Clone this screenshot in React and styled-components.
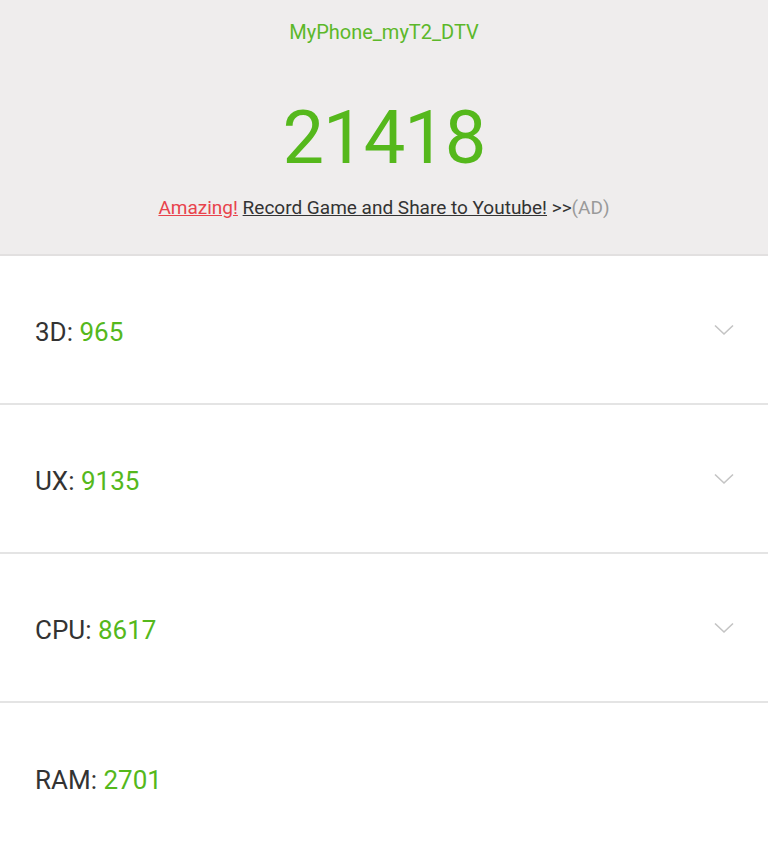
import React from "react";
import styled, { createGlobalStyle } from "styled-components";

const GlobalStyle = createGlobalStyle`
  html, body {
    margin: 0;
    padding: 0;
    background: #ffffff;
    font-family: Roboto, "Liberation Sans", sans-serif;
  }
`;

const scores = [
  { label: "3D", value: 965, expandable: true },
  { label: "UX", value: 9135, expandable: true },
  { label: "CPU", value: 8617, expandable: true },
  { label: "RAM", value: 2701, expandable: false },
];

const App = () => {
  return (
    <>
      <GlobalStyle />
      <Page>
        <Header>
          <DeviceName>MyPhone_myT2_DTV</DeviceName>
          <Total>21418</Total>
          <AdLine>
            <AdHot>Amazing!</AdHot> <AdLink>Record Game and Share to Youtube!</AdLink>
            <AdArrow> &gt;&gt;</AdArrow>
            <AdTag>(AD)</AdTag>
          </AdLine>
        </Header>
        <List>
          {scores.map((s) => (
            <Row key={s.label}>
              <Label>
                {s.label}: <Value>{s.value}</Value>
              </Label>
              {s.expandable && (
                <Chevron width="20" height="12" viewBox="0 0 20 12">
                  <path
                    d="M1 1.5 L10 10 L19 1.5"
                    fill="none"
                    stroke="#c4c4c4"
                    strokeWidth="1.6"
                  />
                </Chevron>
              )}
            </Row>
          ))}
        </List>
      </Page>
    </>
  );
};

export default App;

const Page = styled.div`
  width: 768px;
  min-height: 846px;
  background: #ffffff;
`;

const Header = styled.header`
  height: 256px;
  background: #efeded;
  border-bottom: 2px solid #e2e0e0;
  display: flex;
  flex-direction: column;
  align-items: center;
  box-sizing: border-box;
  padding-top: 19px;
`;

const DeviceName = styled.div`
  color: #5cb82a;
  font-size: 20px;
  line-height: 26px;
`;

const Total = styled.div`
  color: #55b81c;
  font-size: 74px;
  line-height: 80px;
  margin-top: 53px;
  letter-spacing: -1px;
`;

const AdLine = styled.div`
  margin-top: 18px;
  font-size: 19px;
  line-height: 24px;
  color: #333333;
  white-space: nowrap;
`;

const AdHot = styled.span`
  color: #e8434c;
  text-decoration: underline;
  text-decoration-color: #e8434c;
`;

const AdLink = styled.span`
  color: #333333;
  text-decoration: underline;
`;

const AdArrow = styled.span`
  color: #333333;
`;

const AdTag = styled.span`
  color: #9a9a9a;
`;

const List = styled.div`
  display: flex;
  flex-direction: column;
`;

const Row = styled.div`
  height: 149px;
  box-sizing: border-box;
  border-bottom: 2px solid #e4e4e4;
  display: flex;
  align-items: center;
  justify-content: space-between;
  padding: 0 34px 0 35px;
  &:last-child {
    border-bottom: none;
  }
`;

const Label = styled.div`
  font-size: 26px;
  color: #333333;
  padding-top: 4px;
`;

const Value = styled.span`
  color: #55b81c;
`;

const Chevron = styled.svg`
  display: block;
  margin-bottom: 0px;
`;
